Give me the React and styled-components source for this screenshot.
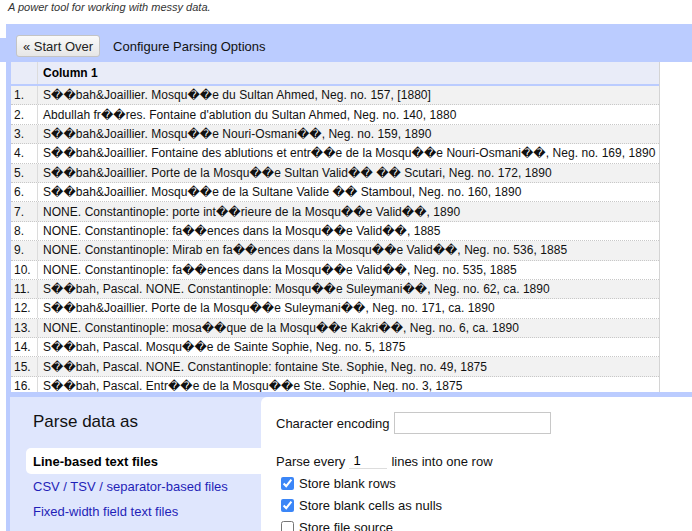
import React from "react";
import styled, { createGlobalStyle } from "styled-components";

const X = "\uFFFD\uFFFD";

const rows = [
  `S${X}bah&Joaillier. Mosqu${X}e du Sultan Ahmed, Neg. no. 157, [1880]`,
  `Abdullah fr${X}res. Fontaine d'ablution du Sultan Ahmed, Neg. no. 140, 1880`,
  `S${X}bah&Joaillier. Mosqu${X}e Nouri-Osmani${X}, Neg. no. 159, 1890`,
  `S${X}bah&Joaillier. Fontaine des ablutions et entr${X}e de la Mosqu${X}e Nouri-Osmani${X}, Neg. no. 169, 1890`,
  `S${X}bah&Joaillier. Porte de la Mosqu${X}e Sultan Valid${X} ${X} Scutari, Neg. no. 172, 1890`,
  `S${X}bah&Joaillier. Mosqu${X}e de la Sultane Valide ${X} Stamboul, Neg. no. 160, 1890`,
  `NONE. Constantinople: porte int${X}rieure de la Mosqu${X}e Valid${X}, 1890`,
  `NONE. Constantinople: fa${X}ences dans la Mosqu${X}e Valid${X}, 1885`,
  `NONE. Constantinople: Mirab en fa${X}ences dans la Mosqu${X}e Valid${X}, Neg. no. 536, 1885`,
  `NONE. Constantinople: fa${X}ences dans la Mosqu${X}e Valid${X}, Neg. no. 535, 1885`,
  `S${X}bah, Pascal. NONE. Constantinople: Mosqu${X}e Suleymani${X}, Neg. no. 62, ca. 1890`,
  `S${X}bah&Joaillier. Porte de la Mosqu${X}e Suleymani${X}, Neg. no. 171, ca. 1890`,
  `NONE. Constantinople: mosa${X}que de la Mosqu${X}e Kakri${X}, Neg. no. 6, ca. 1890`,
  `S${X}bah, Pascal. Mosqu${X}e de Sainte Sophie, Neg. no. 5, 1875`,
  `S${X}bah, Pascal. NONE. Constantinople: fontaine Ste. Sophie, Neg. no. 49, 1875`,
  `S${X}bah, Pascal. Entr${X}e de la Mosqu${X}e Ste. Sophie, Neg. no. 3, 1875`,
];

const formats = [
  "Line-based text files",
  "CSV / TSV / separator-based files",
  "Fixed-width field text files",
];

const options = [
  { label: "Store blank rows", checked: true },
  { label: "Store blank cells as nulls", checked: true },
  { label: "Store file source", checked: false },
];

const GlobalStyle = createGlobalStyle`
  html, body {
    margin: 0;
    padding: 0;
    background: #fff;
    font-family: "Liberation Sans", Arial, "DejaVu Sans", sans-serif;
    color: #000;
    overflow: hidden;
  }
`;

export default function App() {
  return (
    <Page>
      <GlobalStyle />
      <Tagline>A power tool for working with messy data.</Tagline>
      <Workspace>
        <HeaderBar>
          <Button>« Start Over</Button>
          <Title>Configure Parsing Options</Title>
        </HeaderBar>
        <DataArea>
          <DataTable>
            <HeadRow>
              <NumCell />
              <HeadCell>Column 1</HeadCell>
            </HeadRow>
            {rows.map((r, i) => (
              <Row key={i} $odd={i % 2 === 0}>
                <NumCell>{i + 1}.</NumCell>
                <Cell>{r}</Cell>
              </Row>
            ))}
          </DataTable>
        </DataArea>
        <Controls>
          <FormatPanel>
            <PanelTitle>Parse data as</PanelTitle>
            {formats.map((f, i) => (
              <FormatTab key={f} $selected={i === 0}>
                {f}
              </FormatTab>
            ))}
          </FormatPanel>
          <OptionsPanel>
            <Line>
              Character encoding <EncodingInput />
            </Line>
            <Line $top={16}>
              Parse every <CountInput defaultValue="1" /> lines into one row
            </Line>
            {options.map((o) => (
              <Check key={o.label}>
                <input type="checkbox" defaultChecked={o.checked} />
                {o.label}
              </Check>
            ))}
          </OptionsPanel>
        </Controls>
      </Workspace>
    </Page>
  );
}

const Page = styled.div`
  width: 692px;
  height: 531px;
  overflow: hidden;
`;

const Tagline = styled.div`
  height: 24px;
  padding: 1px 0 0 8px;
  box-sizing: border-box;
  font-size: 11px;
  font-style: italic;
  color: #333;
`;

const Workspace = styled.div`
  margin-left: 6px;
  background: #bbccff;
`;

const HeaderBar = styled.div`
  position: relative;
  height: 38px;
  box-sizing: border-box;
  padding: 11px 10px 5px;
  display: flex;
  align-items: center;
  gap: 13px;
  &::before {
    content: "";
    position: absolute;
    left: -6px;
    top: 14px;
    width: 6px;
    height: 24px;
    background: #bbccff;
  }
`;

const Button = styled.button`
  height: 22px;
  padding: 0 6px;
  font-family: inherit;
  font-size: 13px;
  color: #222;
  border: 1px solid #c4c4c4;
  border-radius: 3px;
  background: linear-gradient(#fafafa, #e6e6e6);
`;

const Title = styled.span`
  font-size: 13px;
  color: #111;
`;

const DataArea = styled.div`
  height: 330px;
  padding-left: 5px;
  background: linear-gradient(90deg, #bbccff 5px, #fff 5px);
  overflow: hidden;
`;

const DataTable = styled.div`
  width: 648px;
  height: 100%;
  border-right: 1px solid #d4d4d4;
  overflow: hidden;
  font-size: 12px;
`;

const HeadRow = styled.div`
  display: flex;
  height: 24px;
  box-sizing: border-box;
  background: #e9ecf8;
  border-bottom: 2px solid #bbccff;
`;

const Row = styled.div`
  display: flex;
  height: 19.4px;
  box-sizing: border-box;
  background: ${(p) => (p.$odd ? "#f2f2f2" : "#fff")};
  border-bottom: 1px dotted #c8c8c8;
`;

const NumCell = styled.div`
  width: 27px;
  flex: none;
  box-sizing: border-box;
  padding-left: 3px;
  border-right: 1px solid #dcdcdc;
  display: flex;
  align-items: center;
  color: #111;
`;

const HeadCell = styled.div`
  padding-left: 5px;
  display: flex;
  align-items: center;
  font-weight: bold;
`;

const Cell = styled.div`
  padding-left: 5px;
  display: flex;
  align-items: center;
  white-space: nowrap;
  color: #111;
  letter-spacing: 0.05px;
`;

const Controls = styled.div`
  display: flex;
  border-top: 5px solid #bbccff;
  height: 140px;
  padding-left: 4px;
  background: linear-gradient(90deg, #bbccff 4px, #dfe6fd 4px);
`;

const FormatPanel = styled.div`
  width: 251px;
  flex: none;
  padding: 15px 0 0 16px;
  box-sizing: border-box;
`;

const PanelTitle = styled.div`
  font-size: 17px;
  color: #111;
  height: 36px;
  padding-left: 7px;
`;

const FormatTab = styled.div`
  height: ${(p) => (p.$selected ? 26 : 25)}px;
  display: flex;
  align-items: center;
  padding-left: 7px;
  font-size: 13px;
  border-radius: 5px 0 0 5px;
  background: ${(p) => (p.$selected ? "#fff" : "transparent")};
  font-weight: ${(p) => (p.$selected ? "bold" : "normal")};
  color: ${(p) => (p.$selected ? "#000" : "#1f1fb8")};
`;

const OptionsPanel = styled.div`
  flex: 1;
  background: #fff;
  border-top-left-radius: 6px;
  padding: 15px 0 0 15px;
  font-size: 13px;
  color: #111;
`;

const Line = styled.div`
  display: flex;
  align-items: center;
  gap: 4px;
  margin-top: ${(p) => p.$top || 0}px;
  height: 22px;
`;

const EncodingInput = styled.input`
  width: 157px;
  height: 22px;
  box-sizing: border-box;
  border: 1px solid #c8c8c8;
  margin-left: 1px;
`;

const CountInput = styled.input`
  width: 38px;
  height: 15px;
  box-sizing: border-box;
  border: none;
  border-bottom: 1px solid #ddd;
  padding: 0 4px;
  font-family: inherit;
  font-size: 13px;
  outline: none;
`;

const Check = styled.label`
  display: flex;
  align-items: center;
  height: 22px;
  padding-left: 5px;
  gap: 5px;
  input {
    margin: 0;
    width: 13px;
    height: 13px;
    accent-color: #3b86f7;
  }
`;
